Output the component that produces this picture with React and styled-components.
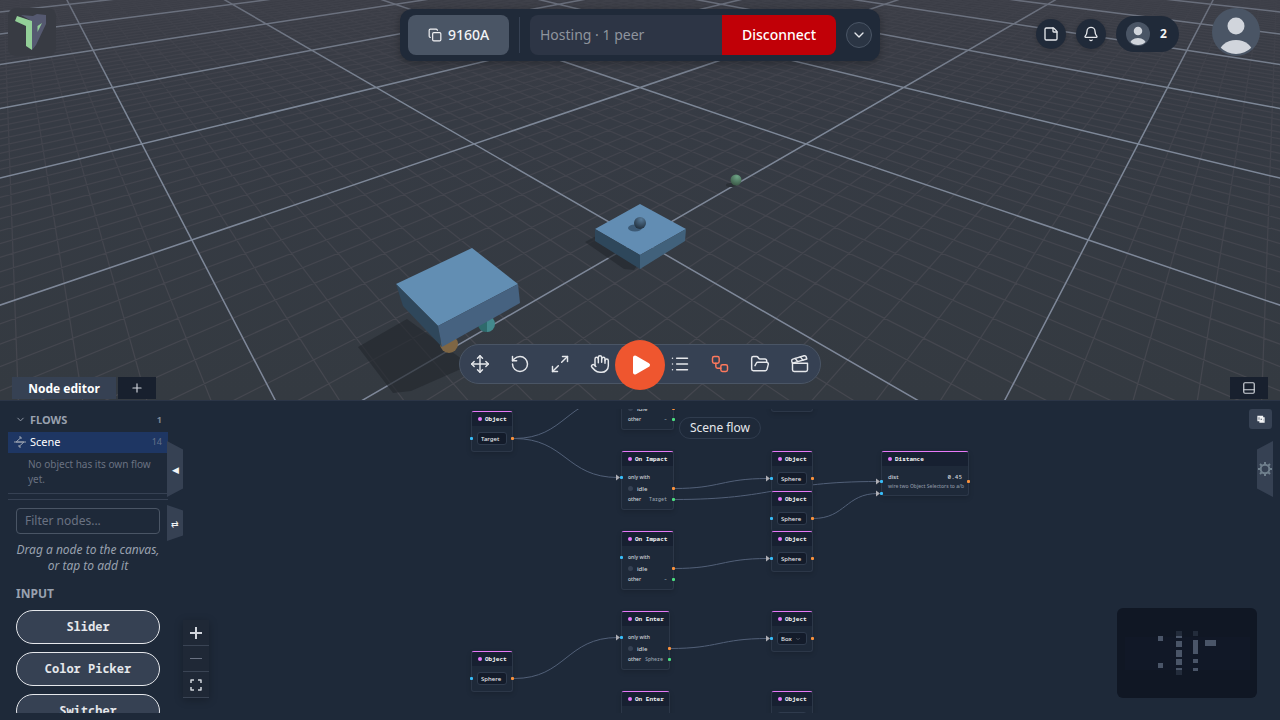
import { useState } from 'react';
import styled, { createGlobalStyle } from 'styled-components';
import {
    Bell,
    ChevronDown,
    Clapperboard,
    Copy,
    FolderOpen,
    Hand,
    List,
    Maximize2,
    Move,
    PanelBottom,
    Plus,
    RotateCcw,
    StickyNote,
    Workflow,
} from 'lucide-react';

const GlobalStyle = createGlobalStyle`
  *, *::before, *::after { box-sizing: border-box; }
  body {
    margin: 0;
    background: #1e2939;
    color: #e5e7eb;
    font-family: "Noto Sans", "Open Sans", sans-serif;
    font-size: 12px;
  }
  button, input, select { font: inherit; color: inherit; margin: 0; }
  button { cursor: pointer; padding: 0; border: 0; background: none; }
  svg { display: block; }
`;

const mono = '"Noto Sans Mono", "DejaVu Sans Mono", monospace';

const Page = styled.div`
  display: flex;
  flex-direction: column;
  height: 100vh;
  overflow: hidden;
`;

/* ---------- 3D view ---------- */

const View = styled.section`
  position: relative;
  flex: 1;
  min-height: 0;
  display: flex;
  flex-direction: column;
  justify-content: space-between;
`;

const SceneSvg = styled.svg`
  position: absolute;
  inset: 0;
  width: 100%;
  height: 100%;
`;

const Header = styled.header`
  position: relative;
  display: grid;
  grid-template-columns: 1fr auto 1fr;
  align-items: start;
  padding: 8px 8px 0;
`;

const LogoLink = styled.a`
  width: 48px;
  height: 48px;
  border-radius: 8px;
  background: #383b43;
`;

const SessionBar = styled.div`
  display: flex;
  align-items: center;
  margin-top: 1px;
  width: 480px;
  padding: 6px 8px;
  border-radius: 12px;
  background: #202a39;
  box-shadow: 0 2px 8px rgba(0, 0, 0, 0.3);
  font-size: 14px;
  line-height: 20px;
`;

const RoomButton = styled.button`
  display: flex;
  align-items: center;
  justify-content: center;
  gap: 6px;
  width: 101px;
  height: 40px;
  border-radius: 8px;
  background: #4a5565;
  color: #f3f4f6;
  font-weight: 500;
`;

const Divider = styled.span`
  width: 1px;
  height: 36px;
  margin: 0 10px;
  background: #364153;
`;

const StatusInput = styled.input`
  flex: 1;
  min-width: 0;
  height: 40px;
  padding: 0 10px 2px;
  border: 0;
  border-radius: 8px 0 0 8px;
  background: #2d3545;
  color: #8f949d;
  outline: none;
`;

const DisconnectButton = styled.button`
  width: 114px;
  height: 40px;
  border-radius: 0 8px 8px 0;
  background: #c10007;
  color: #fff;
  font-weight: 500;
`;

const MoreButton = styled.button`
  display: grid;
  place-items: center;
  width: 26px;
  height: 26px;
  margin-left: 10px;
  border: 1px solid #4a5565;
  border-radius: 50%;
  background: #2b3544;
`;

const Account = styled.div`
  display: flex;
  justify-content: flex-end;
  align-items: center;
  gap: 10px;
  padding-right: 12px;
`;

const RoundButton = styled.button`
  display: grid;
  place-items: center;
  width: 30px;
  height: 30px;
  margin-top: 4px;
  border-radius: 50%;
  background: #202a39;
  color: #e5e7eb;
  box-shadow: 0 1px 4px rgba(0, 0, 0, 0.2);
`;

const PeersButton = styled.button`
  display: flex;
  align-items: center;
  gap: 10px;
  width: 63px;
  height: 36px;
  margin: 4px 23px 0 0;
  padding: 0 10px;
  border-radius: 18px;
  background: #202a39;
  color: #f3f4f6;
  font-weight: 700;
  line-height: 16px;
`;

const Footer = styled.div`
  position: relative;
  display: grid;
  grid-template-columns: 1fr auto 1fr;
  align-items: end;
  padding: 0 12px 1px;
`;

const Tabs = styled.div`
  display: flex;
  gap: 2px;
`;

const Tab = styled.button`
  display: grid;
  place-items: center;
  width: ${props => (props.$wide ? '104px' : '38px')};
  height: 22px;
  background: ${props => (props.$wide ? '#364153' : '#18202e')};
  color: ${props => (props.$wide ? '#fff' : '#d1d5dc')};
  font-weight: 700;
  justify-self: end;
`;

const Toolbar = styled.div`
  display: flex;
  align-items: center;
  height: 40px;
  margin-bottom: 15px;
  border: 1px solid #4a5565;
  border-radius: 20px;
  background: #364153;
`;

const ToolButton = styled.button`
  display: grid;
  place-items: center;
  width: 40px;
  height: 38px;
  color: ${props => (props.$active ? '#fe795d' : '#e5e7eb')};
`;

const PlayButton = styled.button`
  display: grid;
  place-items: center;
  width: 50px;
  height: 50px;
  margin: 2px -5px 0;
  border-radius: 50%;
  background: #ef562f;
  z-index: 1;
`;

/* ---------- bottom panel ---------- */

const Panel = styled.section`
  display: flex;
  height: 320px;
  padding: 8px 8px 7px;
  border-top: 1px solid #2b3547;
  background: #1e2939;
`;

const Sidebar = styled.aside`
  width: 160px;
  overflow: hidden;
`;

const FlowsHead = styled.button`
  display: flex;
  align-items: center;
  gap: 4px;
  width: 100%;
  height: 23px;
  padding: 0 6px 2px 7px;
  color: #99a1af;
  font-size: 11px;
  font-weight: 700;
  span { margin-left: auto; font-size: 9px; color: #7d8695; }
`;

const FlowRow = styled.button`
  display: flex;
  align-items: center;
  gap: 4px;
  width: 100%;
  height: 21px;
  padding: 0 6px 2px;
  background: #1e3663;
  color: #fff;
  font-size: 11px;
  span { margin-left: auto; font-size: 9px; color: #65728a; }
`;

const FlowHint = styled.p`
  margin: 0;
  padding: 4px 10px 6px 20px;
  border-bottom: 1px solid #364153;
  color: #6a7282;
  font-size: 10px;
  line-height: 15px;
`;

const Palette = styled.div`
  display: flex;
  flex-direction: column;
  margin-top: 5px;
  padding: 8px 8px 0;
  border-top: 1px solid #364153;
`;

const FilterInput = styled.input`
  height: 26px;
  width: 100%;
  padding: 0 8px 1px;
  border: 1px solid #4a5565;
  border-radius: 4px;
  background: transparent;
  outline: none;
  &::placeholder { color: #6a7282; opacity: 1; }
`;

const PaletteHint = styled.p`
  margin: 8px 0 12px;
  color: #99a1af;
  font-style: italic;
  line-height: 16px;
  text-align: center;
  white-space: nowrap;
`;

const GroupTitle = styled.h2`
  margin: 0 0 8px;
  color: #99a1af;
  font-size: 12px;
  font-weight: 700;
  line-height: 16px;
`;

const PaletteItem = styled.button`
  flex: none;
  height: 34px;
  margin-bottom: 8px;
  border: 1px solid #e5e7eb;
  border-radius: 17px;
  background: #364153;
  color: #e5e7eb;
  font-family: ${mono};
  font-weight: 700;
  line-height: 16px;
`;

const Canvas = styled.div`
  position: relative;
  flex: 1;
  min-width: 0;
`;

const Pane = styled.div`
  position: absolute;
  inset: 0;
  overflow: hidden;
`;

const EdgeSvg = styled.svg`
  position: absolute;
  inset: 0;
  width: 100%;
  height: 100%;
`;

const NodeCard = styled.article`
  position: absolute;
  left: ${props => props.$x}px;
  top: ${props => props.$y}px;
  width: ${props => props.$w}px;
  border: 1px solid #2c3748;
  border-top-color: #e879f9;
  border-radius: 3px;
  background: #1e2939;
  box-shadow: 0 2px 5px rgba(0, 0, 0, 0.15);
  color: #d1d5dc;
  font-size: 5px;
  white-space: nowrap;
`;

const NodeTitle = styled.h3`
  display: flex;
  align-items: center;
  gap: 3px;
  height: 14px;
  margin: 0;
  padding: 0 6px;
  border-radius: 2px 2px 0 0;
  background: #172031;
  color: #f3f4f6;
  font-family: ${mono};
  font-size: 6px;
  font-weight: 700;
  &::before {
    content: "";
    flex: none;
    width: 4px;
    height: 4px;
    border-radius: 50%;
    background: #e879f9;
  }
`;

const NodeBody = styled.div`
  padding: ${props => (props.$tight ? '6px 5px' : '6px 6px')};
`;

const NodeRow = styled.div`
  display: flex;
  align-items: center;
  justify-content: ${props => (props.$status ? 'flex-start' : 'space-between')};
  gap: 4px;
  height: ${props => props.$h}px;
  font-size: ${props => (props.$large ? 6 : 5)}px;
  font-weight: 500;
  color: ${props => (props.$dim ? '#8b94a3' : 'inherit')};
`;

const Lamp = styled.i`
  width: 5px;
  height: 5px;
  border-radius: 50%;
  background: #364153;
`;

const Mono = styled.span`
  font-family: ${mono};
  color: ${props => (props.$strong ? '#d1d5dc' : '#99a1af')};
`;

const ObjectSelect = styled.select`
  display: block;
  width: 30px;
  height: 13px;
  padding: 1px 3px 0;
  border: 1px solid #2f3b4d;
  border-radius: 3px;
  background: #131b2a;
  color: #e5e7eb;
  font-size: 6px;
  font-weight: 500;
  appearance: none;
  outline: none;
`;

const SelectArrow = styled(ChevronDown)`
  position: absolute;
  right: 11px;
  top: 24px;
  color: #7d8695;
`;

const Port = styled.i`
  position: absolute;
  top: ${props => props.$top}px;
  ${props => (props.$side === 'in' ? 'left: -2px;' : 'right: -2px;')}
  width: 3px;
  height: 3px;
  border-radius: 1px;
  background: ${props => props.$color};
`;

const FlowName = styled.div`
  position: absolute;
  top: 8px;
  left: 50%;
  transform: translateX(-50%);
  padding: 2px 10px;
  border: 1px solid #303c4e;
  border-radius: 11px;
  background: #1e2939;
  line-height: 16px;
  white-space: nowrap;
`;

const Drawer = styled.button`
  position: absolute;
  top: ${props => props.$top}px;
  ${props => (props.$right ? 'right: -1px;' : 'left: -1px;')}
  display: grid;
  place-items: center;
  width: 16px;
  height: ${props => props.$h}px;
  background: #364153;
  color: #f3f4f6;
  font-size: 9px;
  clip-path: ${props => (props.$right
        ? 'polygon(0 15%, 100% 0, 100% 100%, 0 85%)'
        : 'polygon(0 0, 100% 15%, 100% 85%, 0 100%)')};
`;

const PopOut = styled.button`
  position: absolute;
  top: 0;
  right: 0;
  display: grid;
  place-items: center;
  width: 23px;
  height: 20px;
  border-radius: 3px;
  background: #364153;
  color: #f3f4f6;
`;

const ZoomControls = styled.div`
  position: absolute;
  left: 15px;
  bottom: 15px;
  box-shadow: 0 2px 8px rgba(0, 0, 0, 0.25);
`;

const ZoomButton = styled.button`
  display: grid;
  place-items: center;
  width: 26px;
  height: 26px;
  border-bottom: 1px solid #3a4454;
  background: #1f2836;
  color: ${props => (props.disabled ? '#6a7282' : '#d1d5dc')};
`;

const MiniMap = styled.svg`
  position: absolute;
  right: 15px;
  bottom: 15px;
  width: 140px;
  height: 90px;
  border-radius: 6px;
  background: #101724;
`;

/* ground plane seen in perspective, one unit per major cell */
const project = (a, b) => {
    const s = 1 / (0.002231 + 0.00078 * (a + b));
    return [640 + (s * (a - b)) / 2, -130.5 + 0.8264 * s];
};

const gridPath = (step, skipMajor) => {
    const parts = [];
    for (let i = -60; i <= 90; i += step) {
        if (skipMajor && i % 10 === 0) continue;
        const k = i / 10;
        const near = Math.max(-9, -2.6 - k);
        const p = project(k, near);
        const q = project(k, 9);
        parts.push(`M${p[0].toFixed(1)} ${p[1].toFixed(1)}L${q[0].toFixed(1)} ${q[1].toFixed(1)}`);
        parts.push(`M${(1280 - p[0]).toFixed(1)} ${p[1].toFixed(1)}L${(1280 - q[0]).toFixed(1)} ${q[1].toFixed(1)}`);
    }
    return parts.join('');
};

const Scene = () => (
    <SceneSvg viewBox="0 0 1280 400" preserveAspectRatio="xMidYMid slice" aria-hidden="true">
        <defs>
            <linearGradient id="ground" x1="0" y1="0" x2="0" y2="1">
                <stop offset="0" stopColor="#3b3d46" />
                <stop offset="0.3" stopColor="#363b44" />
                <stop offset="1" stopColor="#343a41" />
            </linearGradient>
            <linearGradient id="major" gradientUnits="userSpaceOnUse" x1="0" y1="0" x2="0" y2="400">
                <stop offset="0" stopColor="#686d7a" />
                <stop offset="0.25" stopColor="#7d8797" />
                <stop offset="1" stopColor="#7e8799" />
            </linearGradient>
            <linearGradient id="minor" gradientUnits="userSpaceOnUse" x1="0" y1="0" x2="0" y2="400">
                <stop offset="0" stopColor="#3f414a" />
                <stop offset="0.4" stopColor="#42444d" />
                <stop offset="1" stopColor="#45474f" />
            </linearGradient>
            <radialGradient id="ball" cx="0.6" cy="0.2" r="0.8">
                <stop offset="0" stopColor="#567896" />
                <stop offset="1" stopColor="#22313f" />
            </radialGradient>
            <radialGradient id="greenBall" cx="0.6" cy="0.2" r="0.9">
                <stop offset="0" stopColor="#6ea487" />
                <stop offset="1" stopColor="#35503f" />
            </radialGradient>
        </defs>
        <rect width="1280" height="400" fill="url(#ground)" />
        <path d={gridPath(1, true)} stroke="url(#minor)" strokeWidth="1.2" fill="none" />
        <path d={gridPath(10, false)} stroke="url(#major)" strokeWidth="1.5" fill="none" />
        <g fill="#23282e" fillOpacity="0.65">
            <path d="M358 347L407 319L470 365L411 391L393 393Z" />
            <path d="M585 242L600 234L640 262L634 270L624 269Z" />
        </g>
        <circle cx="449" cy="344" r="9" fill="#7f6644" />
        <circle cx="486" cy="324" r="8" fill="#2f6a6c" />
        <path d="M487 316a8 8 0 0 1 0 16Z" fill="#43898d" />
        <path d="M472 248L518 284L438 326L396 284Z" fill="#628eb3" />
        <path d="M396 284L438 326L442 347L403 306Z" fill="#2f475b" />
        <path d="M438 326L518 284L520 303L442 347Z" fill="#466280" />
        <path d="M640 204L686 229L640 255L595 229Z" fill="#628db3" />
        <path d="M595 229L640 255V269L595 241Z" fill="#2e475b" />
        <path d="M640 255L686 229L685 241L640 269Z" fill="#41617b" />
        <ellipse cx="635" cy="228" rx="7" ry="3.500" fill="#3c5a76" />
        <circle cx="640" cy="223" r="6" fill="url(#ball)" />
        <ellipse cx="731" cy="185" rx="5" ry="2" fill="#2a2f35" />
        <circle cx="736" cy="180" r="5.500" fill="url(#greenBall)" />
    </SceneSvg>
);

const Logo = () => (
    <svg width="48" height="48" viewBox="0 0 48 48">
        <path d="M13 7L25 8L29 6L38 7V16L28 37L24 42L22 12Z" fill="#555970" />
        <path d="M9 8L24 13V42L18 38V18L7 13Z" fill="#93cf98" />
        <path d="M29.500 18L34 15L29.500 24Z" fill="#93cf98" />
    </svg>
);

const Avatar = ({ size }) => (
    <svg width={size} height={size} viewBox="0 0 48 48">
        <clipPath id={`avatar-${size}`}><circle cx="24" cy="24" r="22" /></clipPath>
        <circle cx="24" cy="24" r="24" fill="#4a5565" />
        <g clipPath={`url(#avatar-${size})`} fill="#d1d5dc">
            <circle cx="24" cy="18" r="8.500" />
            <ellipse cx="24" cy="46" rx="17" ry="14" />
        </g>
    </svg>
);

const tools = [
    ['Move', Move],
    ['Rotate', RotateCcw],
    ['Scale', Maximize2],
    ['Grab', Hand],
    ['Play', null],
    ['Outliner', List],
    ['Nodes', Workflow],
    ['Files', FolderOpen],
    ['Record', Clapperboard],
];

const blue = '#38bdf8';
const orange = '#fb923c';
const green = '#4ade80';

const objects = [
    { x: 603, y: -38, value: 'Sphere' },
    { x: 303, y: 2, value: 'Target' },
    { x: 603, y: 42, value: 'Sphere' },
    { x: 603, y: 82, value: 'Sphere' },
    { x: 603, y: 122, value: 'Sphere' },
    { x: 603, y: 202, value: 'Box' },
    { x: 303, y: 242, value: 'Sphere' },
    { x: 603, y: 282, value: 'Sphere' },
];

const events = [
    { x: 453, y: -38, w: 53, title: 'On Impact', other: '–' },
    { x: 453, y: 42, w: 53, title: 'On Impact', other: 'Target' },
    { x: 453, y: 122, w: 53, title: 'On Impact', other: '–' },
    { x: 453, y: 202, w: 49, title: 'On Enter', other: 'Sphere' },
    { x: 453, y: 282, w: 49, title: 'On Enter', other: '–' },
];

const edges = [
    [346, 29.5, 450, 68.5],
    [346, 29.5, 450, -11.5],
    [506, 79.5, 600, 69.5],
    [506, 90.5, 710, 72.5],
    [645, 109.5, 710, 84.5],
    [506, 159.5, 600, 149.5],
    [502, 239.5, 600, 229.5],
    [346, 269.5, 450, 228.5],
];

const ObjectNode = ({ x, y, value }) => (
    <NodeCard $x={x} $y={y} $w={42}>
        <NodeTitle>Object</NodeTitle>
        <NodeBody $tight>
            <ObjectSelect aria-label="Object" defaultValue={value}>
                <option>{value}</option>
            </ObjectSelect>
        </NodeBody>
        {value === 'Box' && <SelectArrow size={6} />}
        <Port $side="in" $top={25} $color={blue} />
        <Port $side="out" $top={25} $color={orange} />
    </NodeCard>
);

const EventNode = ({ x, y, w, title, other }) => (
    <NodeCard $x={x} $y={y} $w={w}>
        <NodeTitle>{title}</NodeTitle>
        <NodeBody>
            <NodeRow $h={10}>only with</NodeRow>
            <NodeRow $h={13} $status $large><Lamp />idle</NodeRow>
            <NodeRow $h={8}>other <Mono>{other}</Mono></NodeRow>
        </NodeBody>
        <Port $side="in" $top={24} $color={blue} />
        <Port $side="out" $top={35} $color={orange} />
        <Port $side="out" $top={46} $color={green} />
    </NodeCard>
);

const NodeCanvas = () => (
    <Canvas>
        <Pane>
            <EdgeSvg>
                {edges.map(([x1, y1, x2, y2]) => {
                    const mid = (x1 + x2) / 2;
                    return (
                        <g key={`${x1}-${y1}-${y2}`}>
                            <path d={`M${x1} ${y1}C${mid} ${y1} ${mid} ${y2} ${x2} ${y2}`} fill="none" stroke="#526078" />
                            <path d={`M${x2 - 2} ${y2 - 3}L${x2 + 2} ${y2}L${x2 - 2} ${y2 + 3}Z`} fill="#b1b1b7" />
                        </g>
                    );
                })}
            </EdgeSvg>
            {objects.map(node => <ObjectNode key={`${node.x}:${node.y}`} {...node} />)}
            {events.map(node => <EventNode key={node.y} {...node} />)}
            <NodeCard $x={713} $y={42} $w={88}>
                <NodeTitle>Distance</NodeTitle>
                <NodeBody>
                    <NodeRow $h={10} $large>dist <Mono $strong>0.45</Mono></NodeRow>
                    <NodeRow $h={7} $dim>wire two Object Selectors to a/b</NodeRow>
                </NodeBody>
                <Port $side="in" $top={28} $color={blue} />
                <Port $side="in" $top={40} $color={blue} />
                <Port $side="out" $top={28} $color={orange} />
            </NodeCard>
        </Pane>
        <FlowName>Scene flow</FlowName>
        <Drawer $top={32} $h={56} aria-label="Collapse palette">◀</Drawer>
        <Drawer $top={96} $h={36} aria-label="Swap side">⇄</Drawer>
        <PopOut aria-label="Pop out">
            <svg width="8" height="8" viewBox="0 0 8 8" fill="none" stroke="currentColor" strokeWidth="1.300">
                <path d="M1 1.500H5.500V5.500H1ZM3 3H7V7H3Z" />
            </svg>
        </PopOut>
        <Drawer $top={32} $h={56} $right aria-label="Settings">
            <svg width="16" height="16" viewBox="0 0 16 16" fill="none" stroke="#6f7f8c" strokeWidth="2">
                <circle cx="8" cy="8" r="4.300" />
                <path d="M8 1V4M8 12V15M1 8H4M12 8H15M3 3L5 5M11 11L13 13M3 13L5 11M11 5L13 3" />
            </svg>
        </Drawer>
        <ZoomControls>
            <ZoomButton aria-label="Zoom in">
                <svg width="12" height="12" stroke="currentColor" strokeWidth="2"><path d="M6 0V12M0 6H12" /></svg>
            </ZoomButton>
            <ZoomButton aria-label="Zoom out" disabled>
                <svg width="12" height="2" stroke="currentColor"><path d="M0 .5H12" /></svg>
            </ZoomButton>
            <ZoomButton aria-label="Fit view">
                <svg width="12" height="12" fill="none" stroke="currentColor" strokeWidth="1.500" strokeLinejoin="round">
                    <path d="M1 4V1H4M8 1H11V4M11 8V11H8M4 11H1V8" />
                </svg>
            </ZoomButton>
        </ZoomControls>
        <MiniMap viewBox="0 0 140 90">
            <rect x="8" y="29" width="125" height="33" fill="#111827" />
            <g fill="#4a5568">
                <rect x="41" y="28" width="5" height="5" />
                <rect x="41" y="55" width="5" height="5" />
                <rect x="59" y="28" width="6" height="2" />
                <rect x="59" y="33" width="6" height="6" />
                <rect x="59" y="42" width="6" height="7" />
                <rect x="59" y="51" width="6" height="6" />
                <rect x="59" y="60" width="6" height="2" />
                <rect x="76" y="32" width="5" height="14" />
                <rect x="76" y="51" width="5" height="4" />
                <rect x="76" y="60" width="5" height="3" />
                <rect x="88" y="32" width="11" height="6" />
            </g>
            <g fill="#232c3b">
                <rect x="59" y="23" width="6" height="5" />
                <rect x="76" y="23" width="5" height="5" />
                <rect x="59" y="62" width="6" height="5" />
            </g>
        </MiniMap>
    </Canvas>
);

const App = () => {
    const [filter, setFilter] = useState('');

    return (
        <Page>
            <GlobalStyle />
            <View>
                <Scene />
                <Header>
                    <LogoLink href="#" aria-label="Home"><Logo /></LogoLink>
                    <SessionBar>
                        <RoomButton><Copy size={14} strokeWidth={2} /> 9160A</RoomButton>
                        <Divider />
                        <StatusInput aria-label="Status" value="Hosting · 1 peer" readOnly />
                        <DisconnectButton>Disconnect</DisconnectButton>
                        <MoreButton aria-label="More"><ChevronDown size={16} /></MoreButton>
                    </SessionBar>
                    <Account>
                        <RoundButton aria-label="Notes"><StickyNote size={16} /></RoundButton>
                        <RoundButton aria-label="Notifications"><Bell size={16} /></RoundButton>
                        <PeersButton><Avatar size={24} />2</PeersButton>
                        <button aria-label="Account"><Avatar size={48} /></button>
                    </Account>
                </Header>
                <Footer>
                    <Tabs>
                        <Tab $wide>Node editor</Tab>
                        <Tab aria-label="Add tab"><Plus size={14} strokeWidth={2} /></Tab>
                    </Tabs>
                    <Toolbar>
                        {tools.map(([label, Icon]) => (Icon ? (
                            <ToolButton key={label} aria-label={label} $active={label === 'Nodes'}>
                                <Icon size={20} strokeWidth={1.75} />
                            </ToolButton>
                        ) : (
                            <PlayButton key={label} aria-label={label}>
                                <svg width="22" height="22" viewBox="0 0 22 22">
                                    <path d="M6 3.500L19 11L6 18.500Z" fill="#fff" stroke="#fff" strokeWidth="4" strokeLinejoin="round" />
                                </svg>
                            </PlayButton>
                        )))}
                    </Toolbar>
                    <Tab aria-label="Dock panel"><PanelBottom size={14} /></Tab>
                </Footer>
            </View>
            <Panel>
                <Sidebar>
                    <FlowsHead><ChevronDown size={11} />FLOWS<span>1</span></FlowsHead>
                    <FlowRow>
                        <svg width="12" height="12" viewBox="0 0 12 12" fill="none" stroke="#99a1af">
                            <path d="M10 6H2L7 1.500M2 6H10L5 10.500" />
                            <path d="M5 1H7V3M7 11H5V9M1 5V7M11 5V7" />
                        </svg>
                        Scene<span>14</span>
                    </FlowRow>
                    <FlowHint>No object has its own flow yet.</FlowHint>
                    <Palette>
                        <FilterInput
                            aria-label="Filter nodes"
                            placeholder="Filter nodes..."
                            value={filter}
                            onChange={e => setFilter(e.target.value)}
                        />
                        <PaletteHint>Drag a node to the canvas,<br />or tap to add it</PaletteHint>
                        <GroupTitle>INPUT</GroupTitle>
                        {['Slider', 'Color Picker', 'Switcher'].map(name => (
                            <PaletteItem key={name}>{name}</PaletteItem>
                        ))}
                    </Palette>
                </Sidebar>
                <NodeCanvas />
            </Panel>
        </Page>
    );
};

export default App;
